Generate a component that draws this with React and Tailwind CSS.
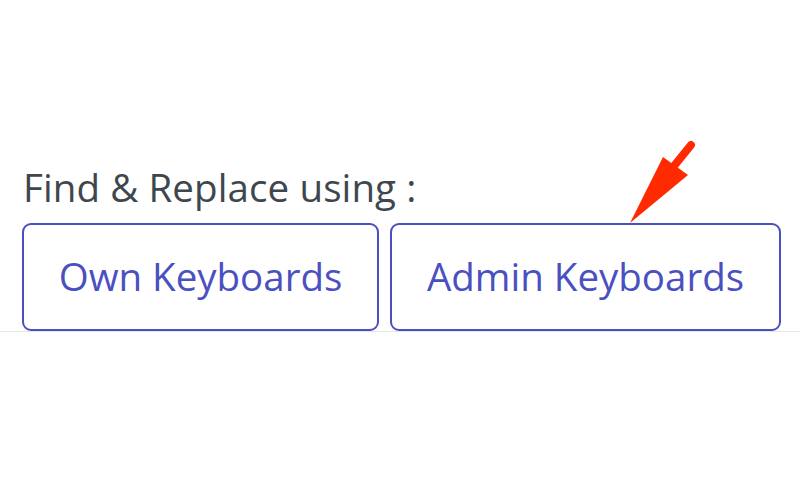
export default function App() {
  return (
    <div className="relative w-[800px] h-[500px] bg-white font-['Open_Sans',sans-serif]">
      <div className="pt-[162px] border-b border-[#e4e6ea]">
        <p className="pl-[23px] text-[38.5px] leading-[50px] text-[#3e474e] tracking-[0.1px]">
          Find &amp; Replace using :
        </p>
        <div className="flex gap-[11px] pl-[22px] mt-[11px]">
          <button className="w-[357px] h-[108px] rounded-[9px] border-2 border-[#4b50c0] text-[38.5px] text-[#4b50c0]">
            Own Keyboards
          </button>
          <button className="w-[391px] h-[108px] rounded-[9px] border-2 border-[#4b50c0] text-[38.5px] text-[#4b50c0]">
            Admin Keyboards
          </button>
        </div>
      </div>
      <svg className="absolute left-0 top-0" width="800" height="500" viewBox="0 0 800 500">
        <line x1="691" y1="145" x2="674" y2="166" stroke="#ff2a00" strokeWidth="8" strokeLinecap="round" />
        <polygon points="663,157 688,175 630,223" fill="#ff2a00" />
      </svg>
    </div>
  );
}
